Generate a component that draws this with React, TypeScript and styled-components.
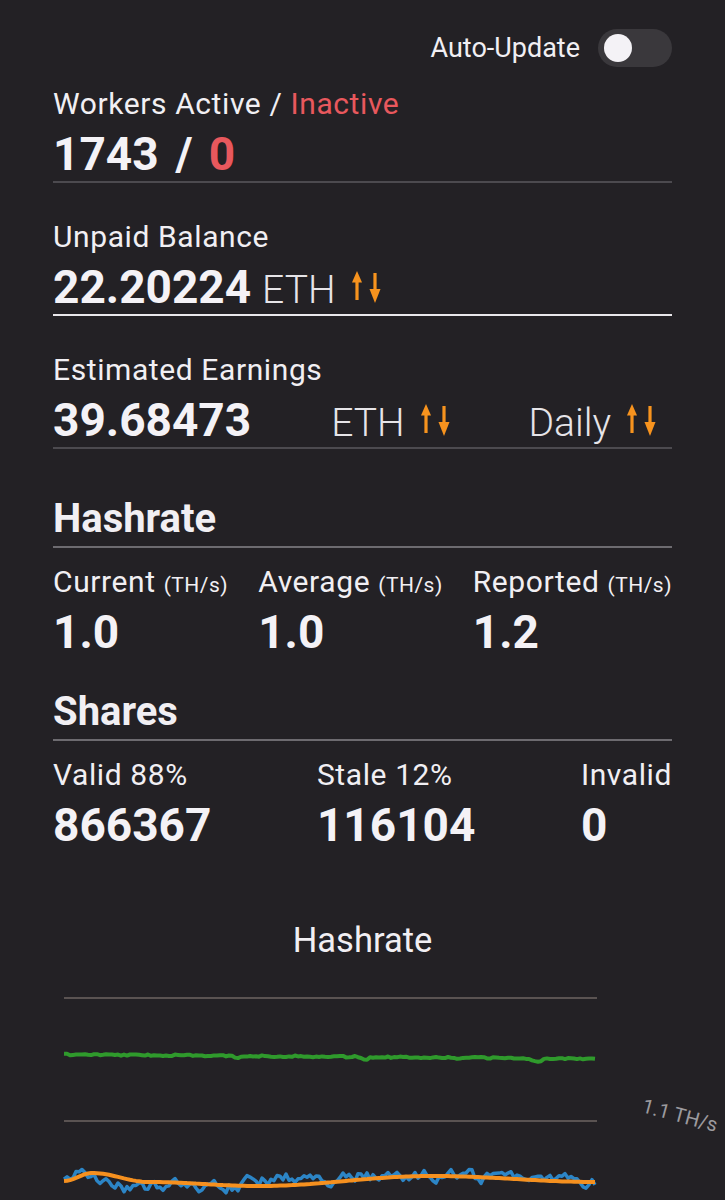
import React from "react";
import styled, { createGlobalStyle } from "styled-components";

const Global = createGlobalStyle`
  html, body { margin: 0; padding: 0; background: #232125; }
  body { font-family: Roboto, "Noto Sans", "Liberation Sans", sans-serif; color: #f1eff3; }
  * { box-sizing: border-box; }
`;

const Page = styled.div`
  width: 725px;
  height: 1200px;
  overflow: hidden;
  padding: 0 53px;
  background: #232125;
`;

const TopBar = styled.div`
  display: flex;
  justify-content: flex-end;
  align-items: center;
  gap: 18px;
  padding-top: 29px;
`;

const ToggleLabel = styled.span`
  font-size: 27px;
  line-height: 32px;
  color: #f1eff3;
`;

const Switch = styled.div`
  width: 74px;
  height: 38px;
  border-radius: 19px;
  background: #3a383c;
  display: flex;
  align-items: center;
  padding-left: 6px;
`;

const Knob = styled.div`
  width: 28px;
  height: 28px;
  border-radius: 50%;
  background: #f4f2f6;
`;

const StatBlock = styled.div<{ $top: number; $line: string }>`
  display: flex;
  flex-direction: column;
  gap: 8px;
  padding-top: ${(p) => p.$top}px;
  padding-bottom: 1px;
  border-bottom: 2px solid ${(p) => p.$line};
`;

const Label = styled.div`
  font-size: 30px;
  letter-spacing: 0.6px;
  line-height: 32px;
  height: 32px;
  color: #f1eff3;
  white-space: nowrap;
`;

const Unit = styled.span`
  font-size: 21px;
  letter-spacing: 0.5px;
`;

const Value = styled.div`
  font-size: 46px;
  line-height: 52px;
  height: 52px;
  font-weight: 700;
  color: #f4f2f6;
  white-space: nowrap;
  display: flex;
  align-items: baseline;
`;

const Red = styled.span`
  color: #e8585d;
`;

const Slash = styled.span`
  margin: 0 16px 0 17px;
`;

const Currency = styled.span`
  margin-left: 11px;
  font-size: 39px;
  font-weight: 300;
  color: #e6e4e8;
  display: inline-flex;
  align-items: baseline;
  gap: 16px;
`;

const EarningsRow = styled.div`
  display: grid;
  grid-template-columns: 1fr 1fr 1fr;
  grid-template-rows: 52px;
  height: 52px;
  align-items: baseline;
  font-size: 46px;
  line-height: 52px;
`;

const EarnValue = styled.span`
  font-weight: 700;
  color: #f4f2f6;
  white-space: nowrap;
`;

const Select = styled.span`
  justify-self: end;
  padding-right: 15px;
  font-size: 39px;
  font-weight: 300;
  color: #e6e4e8;
  display: inline-flex;
  align-items: baseline;
  gap: 16px;
`;

const SectionTitle = styled.div<{ $top: number }>`
  margin-top: ${(p) => p.$top}px;
  font-size: 40px;
  line-height: 44px;
  height: 51px;
  font-weight: 700;
  padding-bottom: 5px;
  border-bottom: 2px solid #6d6b70;
`;

const Columns = styled.div`
  display: flex;
  justify-content: space-between;
  margin-top: 18px;
`;

const Column = styled.div`
  display: flex;
  flex-direction: column;
  gap: 8px;
`;

const ChartTitle = styled.div`
  margin-top: 69px;
  text-align: center;
  font-size: 34.5px;
  line-height: 40px;
  height: 40px;
  color: #f1eff3;
`;

const ChartWrap = styled.div`
  margin: 0 -53px;
  height: 250px;
  svg { display: block; }
`;

const ArrowSvg = styled.svg`
  flex: none;
  width: 30px;
  height: 32px;
`;

const ArrowIcon = () => (
  <ArrowSvg viewBox="0 0 30 32">
    <g fill="#f7931e">
      <polygon points="0,11.5 5,0 10,11.5" />
      <rect x="3.4" y="10" width="3.2" height="19" />
      <rect x="21.4" y="2" width="3.2" height="19" />
      <polygon points="17.5,18 23,32 28.5,18" />
    </g>
  </ArrowSvg>
);

// deterministic pseudo random
function rng(seed: number) {
  let s = seed >>> 0;
  return () => {
    s = (s + 0x6d2b79f5) >>> 0;
    let t = s;
    t = Math.imul(t ^ (t >>> 15), t | 1);
    t ^= t + Math.imul(t ^ (t >>> 7), t | 61);
    return ((t ^ (t >>> 14)) >>> 0) / 4294967296;
  };
}

const orangeKeys: [number, number][] = [
  [64, 1182], [92, 1174], [149, 1183], [258, 1187], [432, 1177], [597, 1183],
];

function orangeAt(x: number) {
  for (let i = 0; i < orangeKeys.length - 1; i++) {
    const [x0, y0] = orangeKeys[i];
    const [x1, y1] = orangeKeys[i + 1];
    if (x >= x0 && x <= x1) {
      const t = (x - x0) / (x1 - x0);
      const c = (1 - Math.cos(Math.PI * t)) / 2;
      return y0 + (y1 - y0) * c;
    }
  }
  return 1183;
}

function gauss(x: number, c: number, w: number, a: number) {
  return a * Math.exp(-((x - c) * (x - c)) / (2 * w * w));
}

function buildPaths() {
  const r1 = rng(7);
  const r2 = rng(42);
  let green = "";
  let blue = "";
  let orange = "";
  let walk = 0;
  for (let x = 64; x <= 597; x += 3) {
    const g =
      1055.5 +
      ((x - 64) / 533) * 4.2 +
      (r1() - 0.5) * 1.6 +
      gauss(x, 238, 3, 2.5) +
      gauss(x, 365, 3, 2.5) +
      gauss(x, 459, 3, 1.5) +
      gauss(x, 537, 5, 3.5);
    green += `${green ? "L" : "M"}${x},${g.toFixed(1)}`;

    walk = walk * 0.55 + (r2() - 0.5) * 11;
    const bias =
      gauss(x, 75, 10, -6) +
      gauss(x, 125, 22, 11) +
      gauss(x, 195, 30, 4) +
      gauss(x, 290, 30, -9) +
      gauss(x, 360, 12, -4) +
      gauss(x, 510, 10, -5);
    const b = Math.min(1198, Math.max(1165, orangeAt(x) + bias + walk));
    blue += `${blue ? "L" : "M"}${x},${b.toFixed(1)}`;

    orange += `${orange ? "L" : "M"}${x},${orangeAt(x).toFixed(1)}`;
  }
  return { green, blue, orange };
}

const paths = buildPaths();

const HashChart = () => (
  <svg width="725" height="250" viewBox="0 961 725 250">
    <line x1="64" y1="999" x2="597" y2="999" stroke="#5a5352" strokeWidth="2" />
    <line x1="64" y1="1122" x2="597" y2="1122" stroke="#5a5352" strokeWidth="2" />
    <path d={paths.green} fill="none" stroke="#2f9a2c" strokeWidth="4" strokeLinejoin="round" />
    <path d={paths.blue} fill="none" stroke="#2c85c6" strokeWidth="3.5" strokeLinejoin="round" />
    <path d={paths.orange} fill="none" stroke="#f5901f" strokeWidth="4" strokeLinejoin="round" />
    <text
      x="641"
      y="1113"
      fontSize="20"
      fill="#9c9a9e"
      fontFamily="Roboto, sans-serif"
      transform="rotate(15 641 1113)"
    >
      1.1 TH/s
    </text>
  </svg>
);

export default function App() {
  return (
    <>
      <Global />
      <Page>
        <TopBar>
          <ToggleLabel>Auto-Update</ToggleLabel>
          <Switch>
            <Knob />
          </Switch>
        </TopBar>

        <StatBlock $top={21} $line="#4c4a4f">
          <Label>
            Workers Active / <Red>Inactive</Red>
          </Label>
          <Value>
            1743<Slash>/</Slash>
            <Red>0</Red>
          </Value>
        </StatBlock>

        <StatBlock $top={38} $line="#e9e7eb">
          <Label>Unpaid Balance</Label>
          <Value>
            22.20224
            <Currency>
              ETH
              <ArrowIcon />
            </Currency>
          </Value>
        </StatBlock>

        <StatBlock $top={38} $line="#4c4a4f">
          <Label>Estimated Earnings</Label>
          <EarningsRow>
            <EarnValue>39.68473</EarnValue>
            <Select>
              ETH
              <ArrowIcon />
            </Select>
            <Select>
              Daily
              <ArrowIcon />
            </Select>
          </EarningsRow>
        </StatBlock>

        <SectionTitle $top={48}>Hashrate</SectionTitle>
        <Columns>
          <Column>
            <Label>
              Current <Unit>(TH/s)</Unit>
            </Label>
            <Value>1.0</Value>
          </Column>
          <Column>
            <Label>
              Average <Unit>(TH/s)</Unit>
            </Label>
            <Value>1.0</Value>
          </Column>
          <Column>
            <Label>
              Reported <Unit>(TH/s)</Unit>
            </Label>
            <Value>1.2</Value>
          </Column>
        </Columns>

        <SectionTitle $top={32}>Shares</SectionTitle>
        <Columns>
          <Column>
            <Label>Valid 88%</Label>
            <Value>866367</Value>
          </Column>
          <Column>
            <Label>Stale 12%</Label>
            <Value>116104</Value>
          </Column>
          <Column>
            <Label>Invalid</Label>
            <Value>0</Value>
          </Column>
        </Columns>

        <ChartTitle>Hashrate</ChartTitle>
        <ChartWrap>
          <HashChart />
        </ChartWrap>
      </Page>
    </>
  );
}
